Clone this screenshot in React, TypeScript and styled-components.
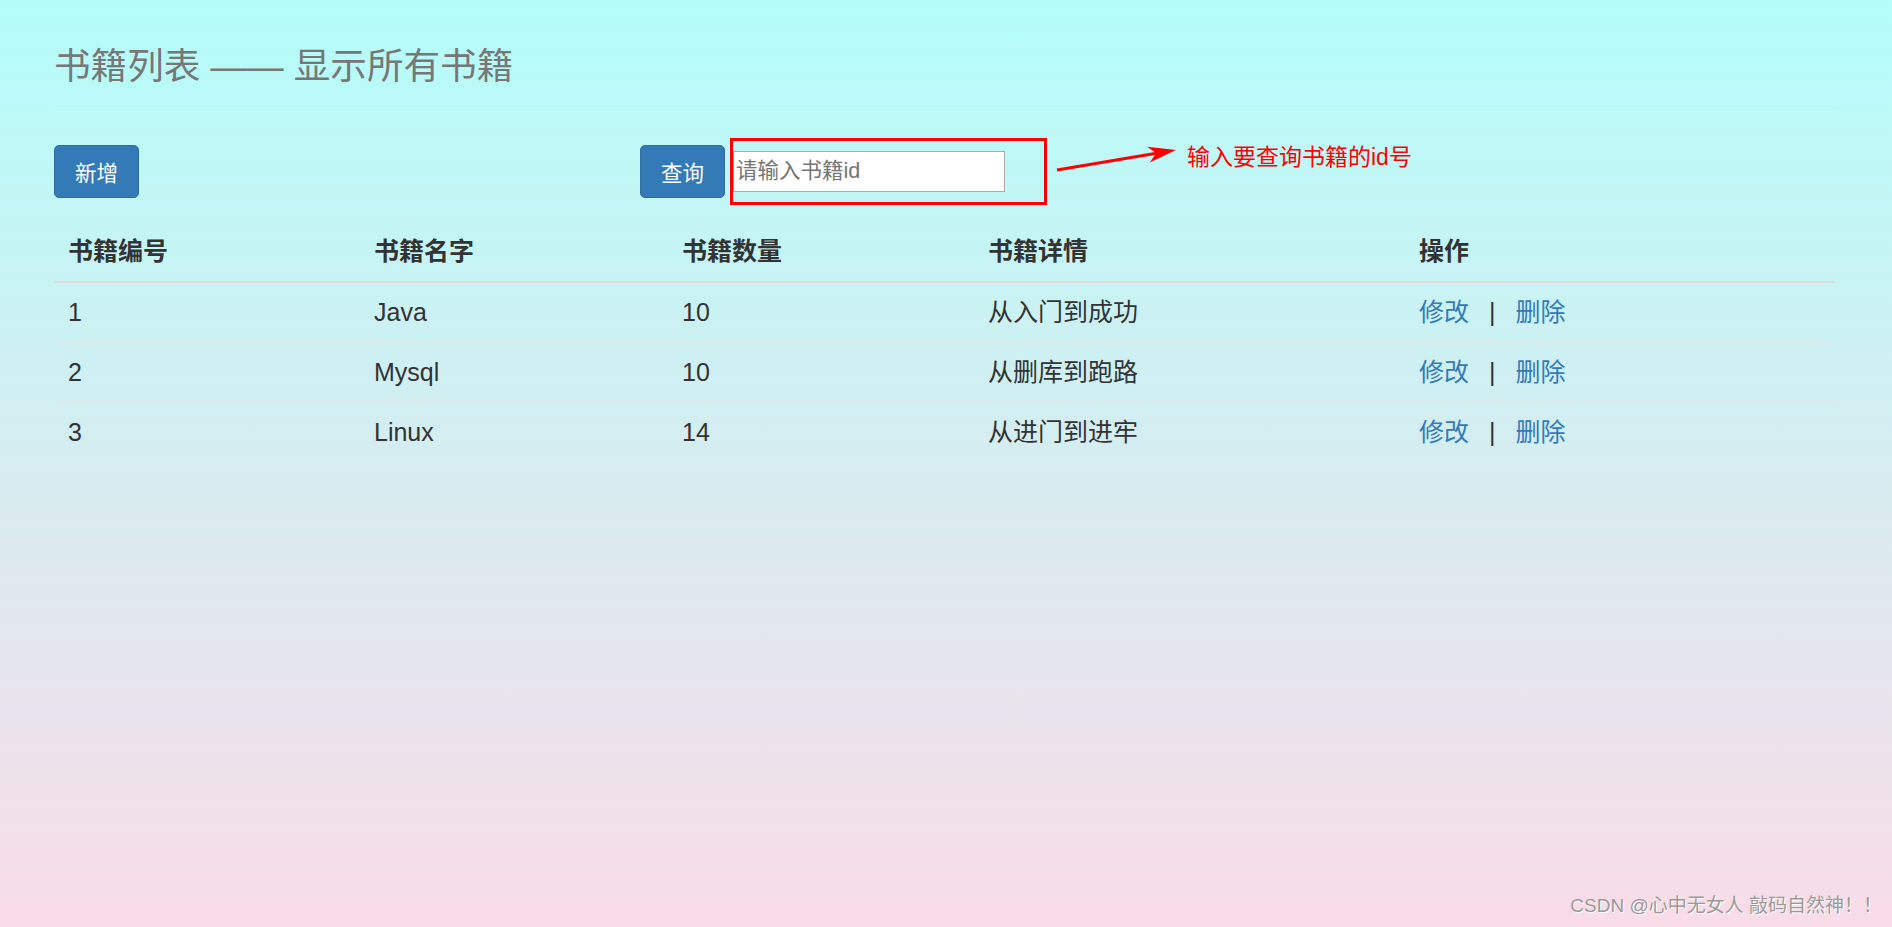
import React from 'react';
import styled, { createGlobalStyle } from 'styled-components';

const GlobalStyle = createGlobalStyle`
  html, body {
    margin: 0;
    padding: 0;
  }
  body {
    font-family: 'Liberation Sans', 'Noto Sans CJK SC', sans-serif;
    color: #333;
  }
`;

interface IBook {
  id: number;
  name: string;
  count: number;
  detail: string;
}

const books: IBook[] = [
  { id: 1, name: 'Java', count: 10, detail: '从入门到成功' },
  { id: 2, name: 'Mysql', count: 10, detail: '从删库到跑路' },
  { id: 3, name: 'Linux', count: 14, detail: '从进门到进牢' },
];

const App: React.FC = () => {
  return (
    <Page>
      <GlobalStyle />
      <Header>
        <Title>书籍列表 —— 显示所有书籍</Title>
      </Header>

      <Toolbar>
        <div>
          <Button>新增</Button>
        </div>
        <QueryGroup>
          <Button>查询</Button>
          <SearchInput type="text" placeholder="请输入书籍id" />
          <Highlight />
          <Arrow width="130" height="44" viewBox="0 0 130 44">
            <line x1="5" y1="35" x2="106" y2="18" stroke="#ff0000" strokeWidth="3" />
            <polygon points="124,15 97.7,27.5 104.3,18.3 95.1,11.8" fill="#ff0000" />
          </Arrow>
          <Note>输入要查询书籍的id号</Note>
        </QueryGroup>
      </Toolbar>

      <Table>
        <colgroup>
          <col style={{ width: 306 }} />
          <col style={{ width: 308 }} />
          <col style={{ width: 306 }} />
          <col style={{ width: 431 }} />
          <col />
        </colgroup>
        <thead>
          <tr>
            <Th>书籍编号</Th>
            <Th>书籍名字</Th>
            <Th>书籍数量</Th>
            <Th>书籍详情</Th>
            <Th>操作</Th>
          </tr>
        </thead>
        <tbody>
          {books.map(book => (
            <tr key={book.id}>
              <Td>{book.id}</Td>
              <Td>{book.name}</Td>
              <Td>{book.count}</Td>
              <Td>{book.detail}</Td>
              <Td>
                <Actions>
                  <Link href="#">修改</Link>
                  <span>|</span>
                  <Link href="#">删除</Link>
                </Actions>
              </Td>
            </tr>
          ))}
        </tbody>
      </Table>

      <Watermark>CSDN @心中无女人 敲码自然神！！</Watermark>
    </Page>
  );
};

const Page = styled.div`
  position: relative;
  box-sizing: border-box;
  min-height: 100vh;
  padding: 0 57px 0 54px;
  background: linear-gradient(to bottom, #b3fdf9 0%, #f9dce8 100%);
`;

const Header = styled.div`
  padding-top: 47px;
  padding-bottom: 24px;
  border-bottom: 1px solid #e6ecec;
`;

const Title = styled.h1`
  margin: 0;
  font-family: 'Liberation Sans', 'Noto Sans CJK SC', sans-serif;
  font-size: 36.6px;
  line-height: 40px;
  font-weight: 400;
  color: #777;
`;

const Toolbar = styled.div`
  display: grid;
  grid-template-columns: 586px 1fr;
  margin-top: 33px;
`;

const QueryGroup = styled.div`
  position: relative;
  display: flex;
  align-items: center;
  gap: 8px;
`;

const Button = styled.button`
  box-sizing: border-box;
  height: 53px;
  padding: 0 20px;
  font-family: 'Liberation Sans', 'Noto Sans CJK SC', sans-serif;
  font-size: 21.5px;
  color: #fff;
  background: #337ab7;
  border: 1px solid #2e6da4;
  border-radius: 5px;
  cursor: pointer;
`;

const SearchInput = styled.input`
  box-sizing: border-box;
  width: 272px;
  height: 41px;
  padding: 0 2px;
  font-family: 'Liberation Sans', 'Noto Sans CJK SC', sans-serif;
  font-size: 21.5px;
  color: #333;
  background: #fff;
  border: 1px solid #a9a9a9;
  outline: none;

  &::placeholder {
    color: #757575;
  }
`;

const Highlight = styled.div`
  position: absolute;
  left: 90px;
  top: -7px;
  width: 317px;
  height: 67px;
  box-sizing: border-box;
  border: 3px solid #ff0000;
  pointer-events: none;
`;

const Arrow = styled.svg`
  position: absolute;
  left: 412px;
  top: -10px;
`;

const Note = styled.div`
  position: absolute;
  left: 547px;
  top: -3px;
  font-size: 23px;
  line-height: 30px;
  color: #ff0000;
  white-space: nowrap;
`;

const Table = styled.table`
  width: 100%;
  margin-top: 25px;
  border-collapse: collapse;
  table-layout: fixed;
  font-size: 25px;
`;

const Th = styled.th`
  text-align: left;
  padding: 11px 14px 12px;
  line-height: 35px;
  font-weight: 700;
  color: #333;
  border-bottom: 2px solid #dddddd;
`;

const Td = styled.td`
  padding: 12px 14px;
  line-height: 35px;
  color: #333;
  border-top: 1px solid #dde6e8;
`;

const Actions = styled.div`
  display: flex;
  align-items: center;
  gap: 20px;
`;

const Link = styled.a`
  color: #337ab7;
  text-decoration: none;
`;

const Watermark = styled.div`
  position: absolute;
  right: 10px;
  bottom: 10px;
  font-size: 19px;
  color: #999;
  text-shadow: 1px 1px 0 #fff;
  white-space: nowrap;
`;

export default App;
